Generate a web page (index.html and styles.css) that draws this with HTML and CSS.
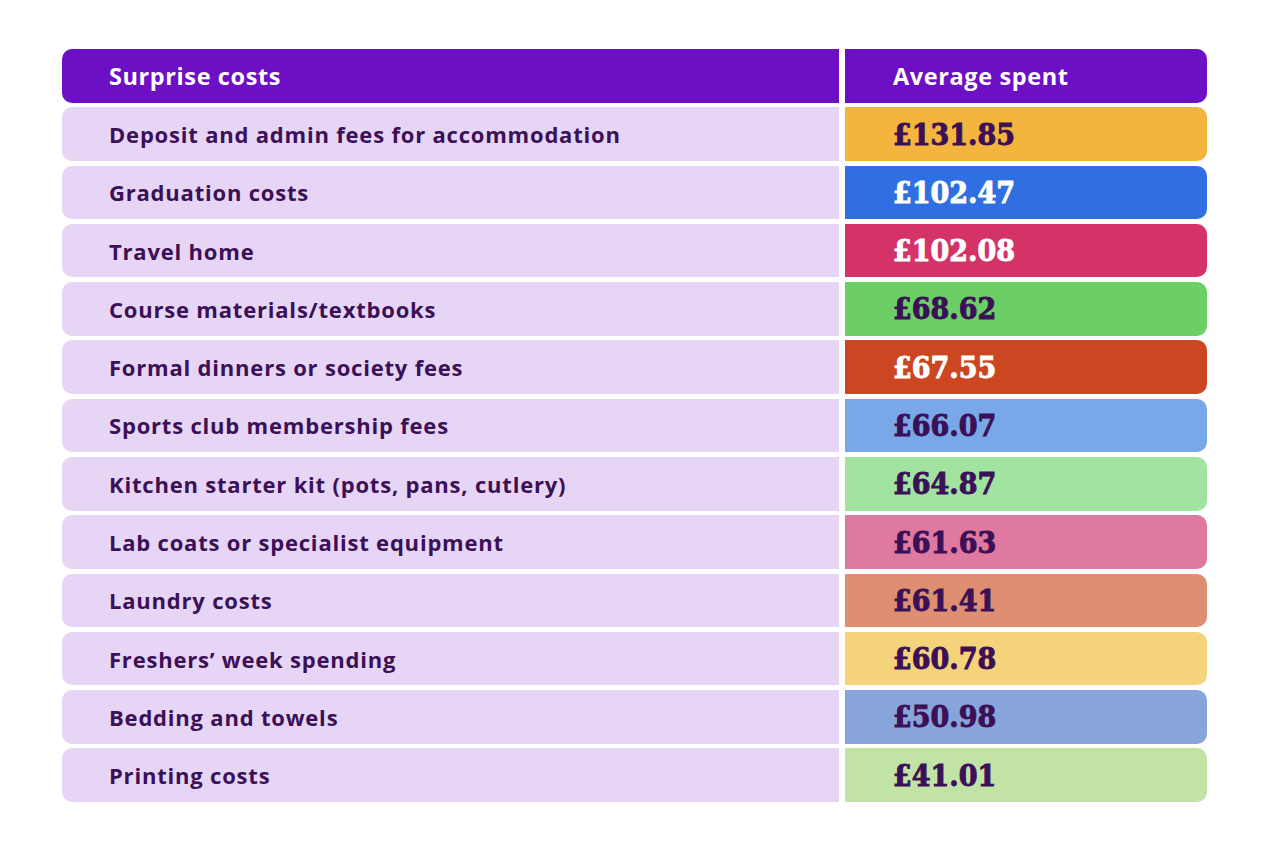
FILE: index.html
```html
<!DOCTYPE html>
<html lang="en">
<head>
<meta charset="utf-8">
<title>Surprise costs</title>
<link rel="stylesheet" href="styles.css">
</head>
<body>
<div class="table">
  <div class="cell head left">Surprise costs</div>
  <div class="cell head right">Average spent</div>

  <div class="cell item">Deposit and admin fees for accommodation</div>
  <div class="cell val c1">£131.85</div>

  <div class="cell item">Graduation costs</div>
  <div class="cell val c2 light">£102.47</div>

  <div class="cell item">Travel home</div>
  <div class="cell val c3 light">£102.08</div>

  <div class="cell item">Course materials/textbooks</div>
  <div class="cell val c4">£68.62</div>

  <div class="cell item">Formal dinners or society fees</div>
  <div class="cell val c5 light">£67.55</div>

  <div class="cell item">Sports club membership fees</div>
  <div class="cell val c6">£66.07</div>

  <div class="cell item">Kitchen starter kit (pots, pans, cutlery)</div>
  <div class="cell val c7">£64.87</div>

  <div class="cell item">Lab coats or specialist equipment</div>
  <div class="cell val c8">£61.63</div>

  <div class="cell item">Laundry costs</div>
  <div class="cell val c9">£61.41</div>

  <div class="cell item">Freshers’ week spending</div>
  <div class="cell val c10">£60.78</div>

  <div class="cell item">Bedding and towels</div>
  <div class="cell val c11">£50.98</div>

  <div class="cell item">Printing costs</div>
  <div class="cell val c12">£41.01</div>
</div>
</body>
</html>
```
FILE: styles.css
```css
html, body {
  margin: 0;
  padding: 0;
  background: #ffffff;
}

.table {
  display: grid;
  grid-template-columns: 777px 362px;
  grid-auto-rows: 53.6px;
  column-gap: 6px;
  row-gap: 4.7px;
  margin: 49px 0 0 62px;
  width: 1145px;
}

.cell {
  display: flex;
  align-items: center;
  padding-left: 47px;
  box-sizing: border-box;
}

.cell:nth-child(odd) {
  border-radius: 10px 0 0 10px;
}

.cell:nth-child(even) {
  border-radius: 0 10px 10px 0;
  padding-left: 48px;
}

.head {
  background: #6c0fc5;
  color: #ffffff;
  font-family: "Open Sans", "Liberation Sans", sans-serif;
  font-weight: 700;
  font-size: 23.5px;
  letter-spacing: 0.6px;
}

.item {
  background: #e6d5f5;
  color: #3b1056;
  font-family: "Open Sans", "Liberation Sans", sans-serif;
  font-weight: 700;
  font-size: 22px;
  letter-spacing: 0.8px;
}

.val {
  color: #3b1056;
  font-family: "DejaVu Serif Condensed", "DejaVu Serif", serif;
  font-stretch: condensed;
  font-weight: 700;
  font-size: 30px;
  letter-spacing: 0;
  -webkit-text-stroke: 0.9px currentColor;
}

.val.light { color: #ffffff; }

.c1 { background: #f3b53e; }
.c2 { background: #2f6fe1; }
.c3 { background: #d33366; }
.c4 { background: #6bcf66; }
.c5 { background: #cc4622; }
.c6 { background: #78a8e8; }
.c7 { background: #a0e4a0; }
.c8 { background: #df79a0; }
.c9 { background: #de8f72; }
.c10 { background: #f5d37a; }
.c11 { background: #87a5db; }
.c12 { background: #c1e3a6; }
```
